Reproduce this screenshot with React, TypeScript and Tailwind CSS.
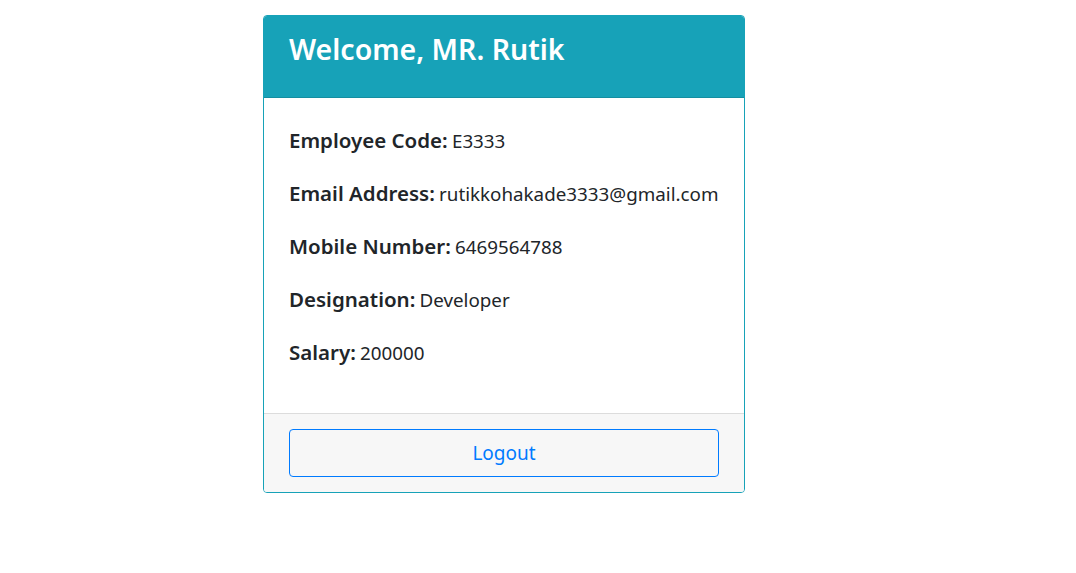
import { FC } from "react";

const employee = [
  { label: "Employee Code:", value: "E3333" },
  { label: "Email Address:", value: "rutikkohakade3333@gmail.com" },
  { label: "Mobile Number:", value: "6469564788" },
  { label: "Designation:", value: "Developer" },
  { label: "Salary:", value: "200000" },
];

const App: FC = () => {
  return (
    <div className="min-h-screen bg-white font-['Noto_Sans',sans-serif] text-[#212529]">
      <div className="pl-[263px] pt-[15px]">
        <div className="w-[482px] rounded-[4px] border border-[#17a2b8] overflow-hidden flex flex-col">
          <div className="h-[82px] bg-[#17a2b8] border-b border-[#148ea1] flex items-center pl-[25px] pb-[14px]">
            <h2 className="text-[28.5px] font-semibold text-white leading-none">Welcome, MR. Rutik</h2>
          </div>

          <div className="bg-white pt-[27px] pb-[44px] pl-[25px] flex flex-col gap-[21px]">
            {employee.map((row) => (
              <p key={row.label} className="leading-[30px] whitespace-nowrap">
                <strong className="text-[20.5px] font-semibold">{row.label}</strong>{" "}
                <span className="text-[18.8px]">{row.value}</span>
              </p>
            ))}
          </div>

          <div className="bg-[#f7f7f7] border-t border-[#dcdcdc] px-[25px] py-[15px]">
            <button className="w-full h-[48px] rounded-[4px] border border-[#007bff] text-[#007bff] text-[19px] bg-transparent">
              Logout
            </button>
          </div>
        </div>
      </div>
    </div>
  );
};

export default App;
